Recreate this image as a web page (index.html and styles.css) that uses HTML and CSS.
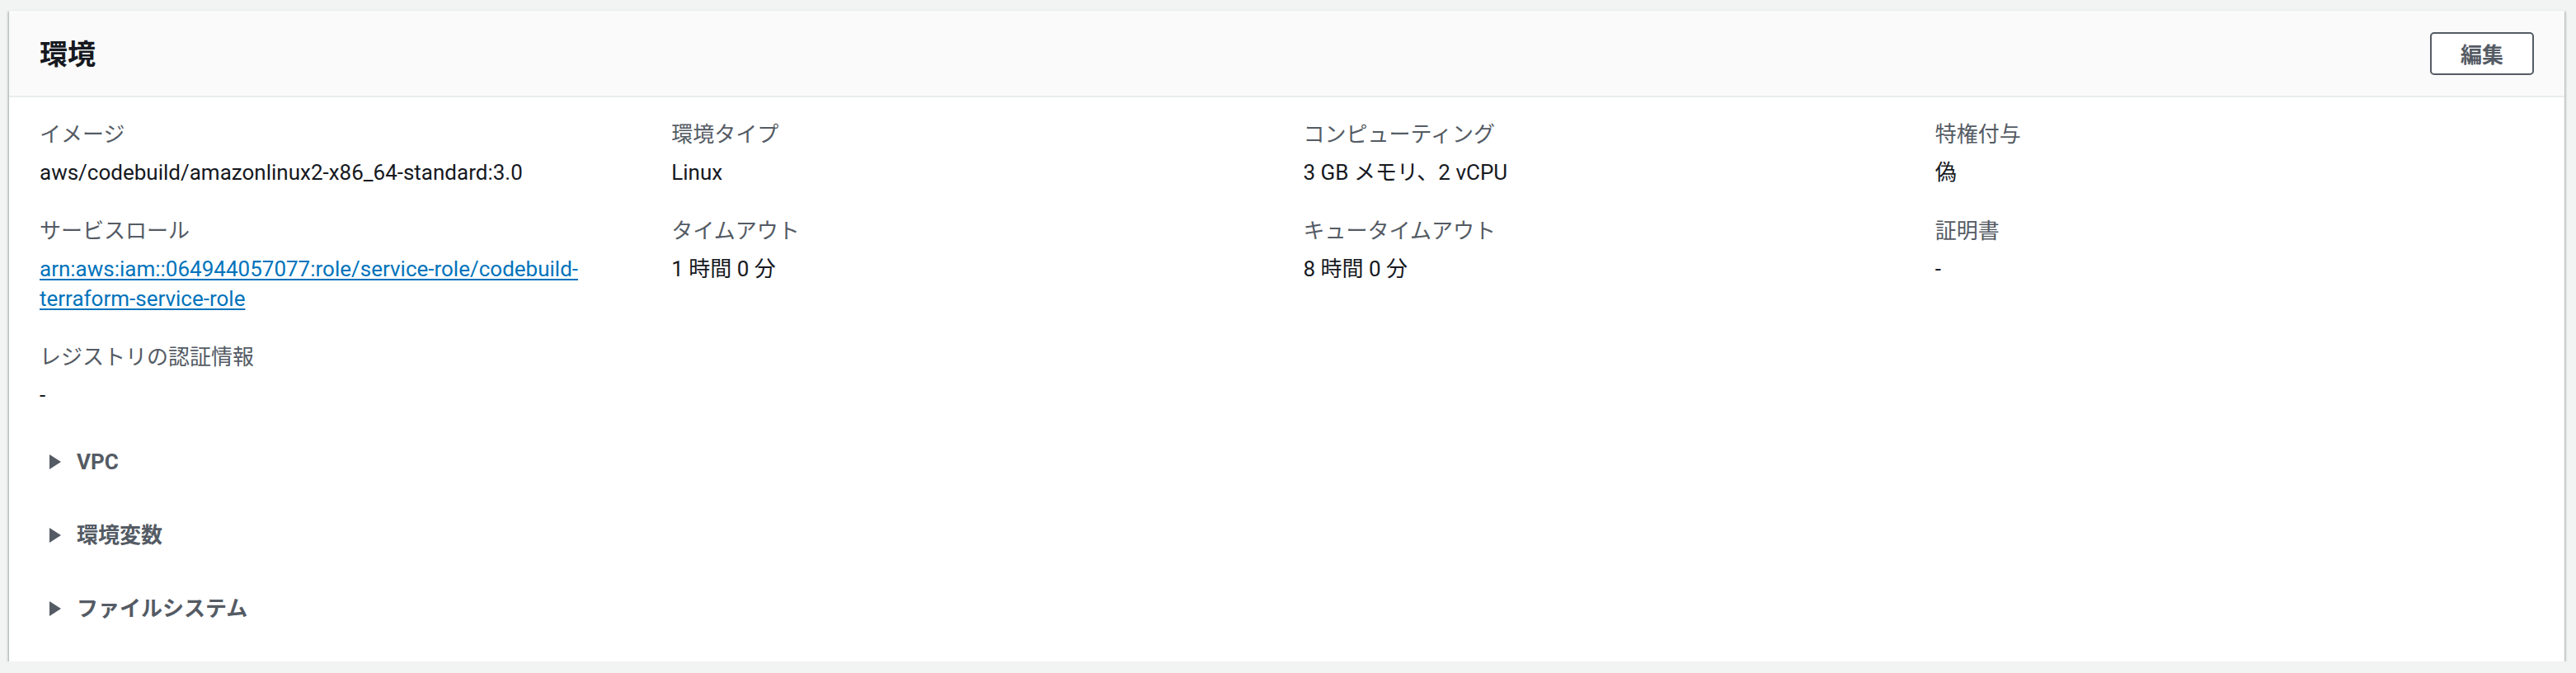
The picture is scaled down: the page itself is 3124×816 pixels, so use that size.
FILE: index.html
```html
<!DOCTYPE html>
<html lang="ja">
<head>
  <meta charset="UTF-8">
  <title>環境</title>
  <link rel="stylesheet" href="styles.css">
</head>
<body>
<div class="card">
  <div class="card-hd">
    <h2>環境</h2>
    <button type="button" class="btn">編集</button>
  </div>
  <div class="card-bd">
    <div class="cols">
      <div class="col">
        <div class="kv"><div class="key">イメージ</div><div class="val">aws/codebuild/amazonlinux2-x86_64-standard:3.0</div></div>
        <div class="kv"><div class="key">サービスロール</div><div class="val"><a href="#">arn:aws:iam::064944057077:role/service-role/codebuild-terraform-service-role</a></div></div>
        <div class="kv"><div class="key">レジストリの認証情報</div><div class="val">-</div></div>
      </div>
      <div class="col">
        <div class="kv"><div class="key">環境タイプ</div><div class="val">Linux</div></div>
        <div class="kv"><div class="key">タイムアウト</div><div class="val">1 時間 0 分</div></div>
      </div>
      <div class="col">
        <div class="kv"><div class="key">コンピューティング</div><div class="val">3 GB メモリ、2 vCPU</div></div>
        <div class="kv"><div class="key">キュータイムアウト</div><div class="val">8 時間 0 分</div></div>
      </div>
      <div class="col">
        <div class="kv"><div class="key">特権付与</div><div class="val">偽</div></div>
        <div class="kv"><div class="key">証明書</div><div class="val">-</div></div>
      </div>
    </div>
    <div class="expand"><svg viewBox="0 0 14 18" width="14" height="18"><polygon points="0,0 14,9 0,18"/></svg><span>VPC</span></div>
    <div class="expand"><svg viewBox="0 0 14 18" width="14" height="18"><polygon points="0,0 14,9 0,18"/></svg><span>環境変数</span></div>
    <div class="expand"><svg viewBox="0 0 14 18" width="14" height="18"><polygon points="0,0 14,9 0,18"/></svg><span>ファイルシステム</span></div>
  </div>
</div>
</body>
</html>
```

FILE: styles.css
```css
*{margin:0;padding:0;box-sizing:border-box;}
body{
  background:#f2f3f3;
  color:#16191f;
  font-family:Roboto,"Noto Sans CJK JP",sans-serif;
  font-size:26px;
  line-height:36px;
  padding:12px 14px 0 11px;
}
.card{
  background:#fff;
  border-top:1px solid #eaeded;
  box-shadow:0 2px 2px rgba(0,28,36,.3),2px 2px 2px rgba(0,28,36,.15),-2px 2px 2px rgba(0,28,36,.15);
}
.card-hd{
  background:#fafafa;
  height:105px;
  border-bottom:2px solid #eaeded;
  padding:0 37px;
  display:flex;
  align-items:center;
  justify-content:space-between;
}
.card-hd h2{font-size:34px;font-weight:bold;color:#16191f;margin-top:2px;}
.btn{
  height:52px;
  padding:0 35px;
  background:#fff;
  border:2px solid #545b64;
  border-radius:5px;
  color:#545b64;
  font-family:inherit;
  font-size:26px;
  font-weight:bold;
}
.card-bd{padding:27px 37px 19px;}
.cols{display:grid;grid-template-columns:repeat(4,1fr);column-gap:40px;}
.kv{margin-bottom:35px;}
.col .kv:last-child{margin-bottom:0;}
.key{color:#545b64;}
.val{margin-top:10px;}
.val a{color:#0073bb;text-decoration:underline;text-underline-offset:3px;}
.expand{
  display:flex;
  align-items:center;
  padding:26px 0 27px 12px;
  color:#545b64;
  font-weight:bold;
}
.cols + .expand{margin-top:19px;}
.expand svg{display:block;flex-shrink:0;fill:#545b64;margin-right:19px;}
```
